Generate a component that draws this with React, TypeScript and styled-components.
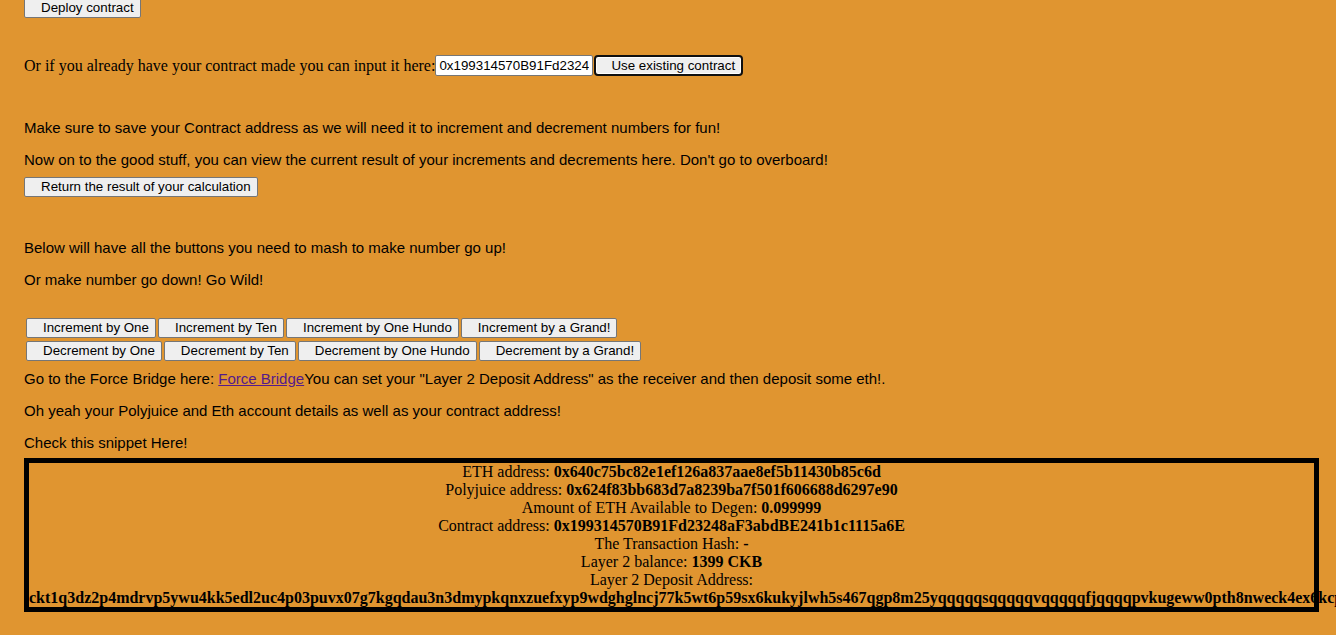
import React from "react";
import styled, { createGlobalStyle, css } from "styled-components";

const GlobalStyle = createGlobalStyle`
  html, body {
    margin: 0;
    padding: 0;
    background: #e09530;
    overflow-x: hidden;
  }
  body {
    font-family: "Liberation Sans", Arial, sans-serif;
    color: #000;
  }
`;

const Page = styled.div`
  display: flex;
  flex-direction: column;
  align-items: flex-start;
  padding: 0 17px 0 24px;
`;

const Button = styled.button<{ $focused?: boolean; $top?: number }>`
  font-family: "Liberation Sans", Arial, sans-serif;
  font-size: 13.33px;
  line-height: 16px;
  height: 20px;
  padding: 1px 6px 1px 16px;
  margin: 0;
  margin-top: ${(p) => p.$top ?? 0}px;
  background: #efefef;
  color: #000;
  border: 1px solid #767676;
  border-radius: 2px;
  white-space: nowrap;
  cursor: pointer;
  ${(p) =>
    p.$focused &&
    css`
      height: 21px;
      margin-left: 1px;
      border: 2px solid #101010;
      border-radius: 4px;
      box-shadow: inset 0 0 0 1px #fff;
      padding: 1px 6px 1px 15px;
    `}
`;

const InputRow = styled.div`
  display: flex;
  align-items: center;
  height: 21px;
  margin-top: 37px;
`;

const SerifLabel = styled.span`
  font-family: "Liberation Serif", "Times New Roman", serif;
  font-size: 16px;
  line-height: 18px;
`;

const AddressInput = styled.input`
  box-sizing: border-box;
  width: 158px;
  height: 21px;
  margin: 0;
  padding: 1px 3px;
  font-family: "Liberation Sans", Arial, sans-serif;
  font-size: 13.33px;
  border: 1px solid #767676;
  border-radius: 2px;
  background: #fff;
  color: #000;
`;

const Text = styled.p<{ $top?: number }>`
  margin: ${(p) => p.$top ?? 15}px 0 0 0;
  font-size: 15px;
  line-height: 17px;
`;

const ButtonRow = styled.div<{ $top: number }>`
  display: flex;
  gap: 2px;
  padding-left: 2px;
  margin-top: ${(p) => p.$top}px;
`;

const Link = styled.a`
  color: #551a8b;
  text-decoration: underline;
`;

const Snippet = styled.div`
  align-self: stretch;
  margin-top: 7px;
  border: 5px solid #000;
  text-align: center;
  font-family: "Liberation Serif", "Times New Roman", serif;
  font-size: 16px;
  line-height: 18px;
  white-space: normal;
  word-break: normal;
`;

const Line = styled.div``;

const increments = [
  "Increment by One",
  "Increment by Ten",
  "Increment by One Hundo",
  "Increment by a Grand!",
];
const decrements = [
  "Decrement by One",
  "Decrement by Ten",
  "Decrement by One Hundo",
  "Decrement by a Grand!",
];

const details: [string, string][] = [
  ["ETH address: ", "0x640c75bc82e1ef126a837aae8ef5b11430b85c6d"],
  ["Polyjuice address: ", "0x624f83bb683d7a8239ba7f501f606688d6297e90"],
  ["Amount of ETH Available to Degen: ", "0.099999"],
  ["Contract address: ", "0x199314570B91Fd23248aF3abdBE241b1c1115a6E"],
  ["The Transaction Hash: ", "-"],
  ["Layer 2 balance: ", "1399 CKB"],
];

const depositAddress =
  "ckt1q3dz2p4mdrvp5ywu4kk5edl2uc4p03puvx07g7kgqdau3n3dmypkqnxzuefxyp9wdghglncj77k5wt6p59sx6kukyjlwh5s467qgp8m25yqqqqqsqqqqqvqqqqqfjqqqqpvkugeww0pth8nweck4ex6kcp0vq3dlqvc5q9fhsv8";

export default function App() {
  return (
    <>
      <GlobalStyle />
      <Page>
        <Button $top={-2}>Deploy contract</Button>
        <InputRow>
          <SerifLabel>Or if you already have your contract made you can input it here:</SerifLabel>
          <AddressInput defaultValue="0x199314570B91Fd23248aF3abdBE241b1c1115a6E" />
          <Button $focused>Use existing contract</Button>
        </InputRow>
        <Text $top={43}>
          Make sure to save your Contract address as we will need it to increment and decrement
          numbers for fun!
        </Text>
        <Text>
          Now on to the good stuff, you can view the current result of your increments and
          decrements here. Don't go to overboard!
        </Text>
        <Button $top={9}>Return the result of your calculation</Button>
        <Text $top={42}>Below will have all the buttons you need to mash to make number go up!</Text>
        <Text>Or make number go down! Go Wild!</Text>
        <ButtonRow $top={30}>
          {increments.map((label) => (
            <Button key={label}>{label}</Button>
          ))}
        </ButtonRow>
        <ButtonRow $top={3}>
          {decrements.map((label) => (
            <Button key={label}>{label}</Button>
          ))}
        </ButtonRow>
        <Text $top={9}>
          Go to the Force Bridge here: <Link href="#">Force Bridge</Link>You can set your "Layer 2
          Deposit Address" as the receiver and then deposit some eth!.
        </Text>
        <Text>Oh yeah your Polyjuice and Eth account details as well as your contract address!</Text>
        <Text>Check this snippet Here!</Text>
        <Snippet>
          {details.map(([label, value]) => (
            <Line key={label}>
              {label}
              <b>{value}</b>
            </Line>
          ))}
          <Line>
            Layer 2 Deposit Address: <b>{depositAddress}</b>
          </Line>
        </Snippet>
      </Page>
    </>
  );
}
